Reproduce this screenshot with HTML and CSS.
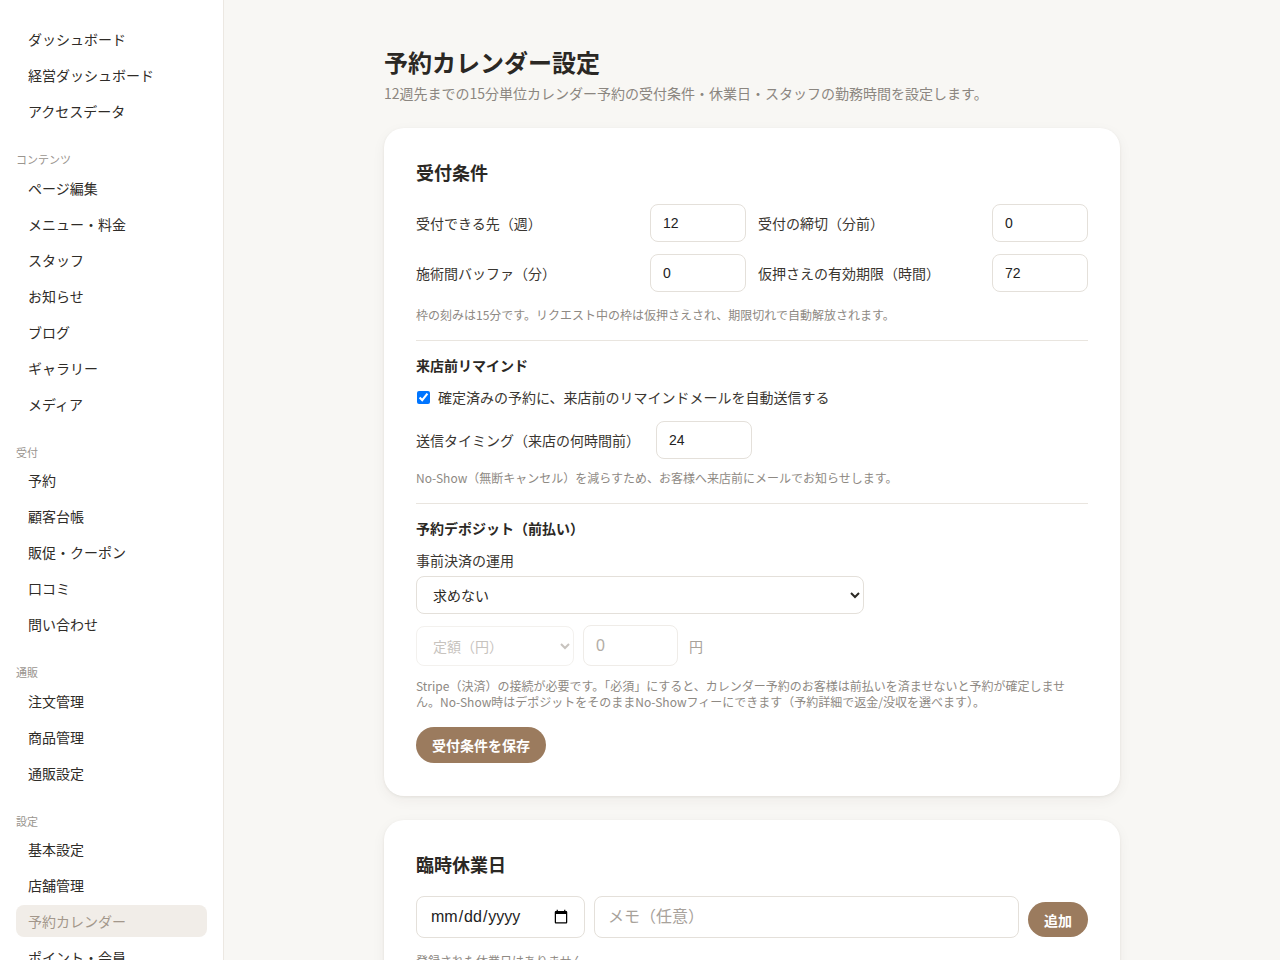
FILE: index.html
```html
<!DOCTYPE html>
<html lang="ja">
<head>
    <meta charset="UTF-8">
    <meta name="viewport" content="width=device-width, initial-scale=1.0">
    <title>予約カレンダー設定</title>
    <link rel="stylesheet" href="styles.css">
</head>
<body>
    <div class="layout">
        <aside class="sidebar">
            <nav class="nav-group">
                <a class="nav-item">ダッシュボード</a>
                <a class="nav-item">経営ダッシュボード</a>
                <a class="nav-item">アクセスデータ</a>
            </nav>
            <nav class="nav-group">
                <div class="nav-label">コンテンツ</div>
                <a class="nav-item">ページ編集</a>
                <a class="nav-item">メニュー・料金</a>
                <a class="nav-item">スタッフ</a>
                <a class="nav-item">お知らせ</a>
                <a class="nav-item">ブログ</a>
                <a class="nav-item">ギャラリー</a>
                <a class="nav-item">メディア</a>
            </nav>
            <nav class="nav-group">
                <div class="nav-label">受付</div>
                <a class="nav-item">予約</a>
                <a class="nav-item">顧客台帳</a>
                <a class="nav-item">販促・クーポン</a>
                <a class="nav-item">口コミ</a>
                <a class="nav-item">問い合わせ</a>
            </nav>
            <nav class="nav-group">
                <div class="nav-label">通販</div>
                <a class="nav-item">注文管理</a>
                <a class="nav-item">商品管理</a>
                <a class="nav-item">通販設定</a>
            </nav>
            <nav class="nav-group">
                <div class="nav-label">設定</div>
                <a class="nav-item">基本設定</a>
                <a class="nav-item">店舗管理</a>
                <a class="nav-item active">予約カレンダー</a>
                <a class="nav-item">ポイント・会員</a>
            </nav>
        </aside>

        <main class="main">
            <div class="content">
                <h1 class="page-title">予約カレンダー設定</h1>
                <p class="page-sub">12週先までの15分単位カレンダー予約の受付条件・休業日・スタッフの勤務時間を設定します。</p>

                <section class="card">
                    <h2 class="card-title">受付条件</h2>
                    <div class="field-grid">
                        <label class="field-label">受付できる先（週）</label>
                        <input class="num-input" type="text" value="12">
                        <label class="field-label">受付の締切（分前）</label>
                        <input class="num-input" type="text" value="0">
                        <label class="field-label">施術間バッファ（分）</label>
                        <input class="num-input" type="text" value="0">
                        <label class="field-label">仮押さえの有効期限（時間）</label>
                        <input class="num-input" type="text" value="72">
                    </div>
                    <p class="note">枠の刻みは15分です。リクエスト中の枠は仮押さえされ、期限切れで自動解放されます。</p>

                    <hr class="divider">

                    <h3 class="sub-title">来店前リマインド</h3>
                    <label class="check-row">
                        <input type="checkbox" checked>
                        <span>確定済みの予約に、来店前のリマインドメールを自動送信する</span>
                    </label>
                    <div class="inline-row">
                        <label class="field-label">送信タイミング（来店の何時間前）</label>
                        <input class="num-input" type="text" value="24">
                    </div>
                    <p class="note tight">No-Show（無断キャンセル）を減らすため、お客様へ来店前にメールでお知らせします。</p>

                    <hr class="divider">

                    <h3 class="sub-title">予約デポジット（前払い）</h3>
                    <label class="block-label">事前決済の運用</label>
                    <select class="select wide">
                        <option>求めない</option>
                        <option>任意</option>
                        <option>必須</option>
                    </select>
                    <div class="deposit-row">
                        <select class="select small" disabled>
                            <option>定額（円）</option>
                        </select>
                        <input class="amount-input" type="text" placeholder="0" disabled>
                        <span class="unit">円</span>
                    </div>
                    <p class="note long">Stripe（決済）の接続が必要です。「必須」にすると、カレンダー予約のお客様は前払いを済ませないと予約が確定しません。No-Show時はデポジットをそのままNo-Showフィーにできます（予約詳細で返金/没収を選べます）。</p>
                    <button class="btn">受付条件を保存</button>
                </section>

                <section class="card">
                    <h2 class="card-title">臨時休業日</h2>
                    <div class="holiday-row">
                        <input class="date-input" type="date">
                        <input class="memo-input" type="text" placeholder="メモ（任意）">
                        <button class="btn small">追加</button>
                    </div>
                    <p class="note">登録された休業日はありません。</p>
                </section>
            </div>
        </main>
    </div>
</body>
</html>
```

FILE: styles.css
```css
* {
    box-sizing: border-box;
}

body {
    margin: 0;
    font-family: "Noto Sans CJK JP", "Noto Sans", sans-serif;
    color: #2b2824;
    background-color: #f8f7f4;
}

.layout {
    display: flex;
    min-height: 100vh;
}

/* sidebar */
.sidebar {
    width: 224px;
    flex-shrink: 0;
    background-color: #fff;
    border-right: 1px solid #ece8e2;
    padding: 23px 16px 20px;
}

.nav-group {
    display: flex;
    flex-direction: column;
    gap: 4px;
}

.nav-group + .nav-group {
    margin-top: 24px;
}

.nav-label {
    font-size: 11px;
    line-height: 16.5px;
    color: #9a958f;
}

.nav-item {
    display: block;
    height: 32px;
    line-height: 32px;
    padding: 0 12px;
    font-size: 14px;
    color: #2f2c28;
    border-radius: 8px;
}

.nav-item.active {
    background-color: #f1ede8;
    color: #a3978b;
}

/* main */
.main {
    flex: 1;
    padding: 46px 0 40px;
}

.content {
    max-width: 736px;
    margin: 0 auto;
}

.page-title {
    margin: 0;
    font-size: 24px;
    line-height: 32px;
    font-weight: 700;
}

.page-sub {
    margin: 5px 0 25px;
    font-size: 14px;
    line-height: 20px;
    color: #8b8680;
}

.card {
    background-color: #fff;
    border-radius: 20px;
    padding: 31px 32px 33px;
    box-shadow: 0 1px 3px rgba(60, 45, 30, 0.08), 0 4px 14px rgba(60, 45, 30, 0.05);
    margin-bottom: 24px;
}

.card-title {
    margin: 0 0 19px;
    font-size: 18px;
    line-height: 26px;
    font-weight: 700;
}

.field-grid {
    display: grid;
    grid-template-columns: 1fr 96px 1fr 96px;
    column-gap: 12px;
    row-gap: 12px;
    align-items: center;
}

.field-label {
    font-size: 14px;
    line-height: 20px;
    color: #3a3631;
}

.num-input {
    width: 96px;
    height: 38px;
    padding: 0 12px;
    font-family: "Liberation Sans", "Noto Sans CJK JP", sans-serif;
    font-size: 14px;
    color: #222;
    border: 1px solid #e4e0da;
    border-radius: 8px;
    background: #fff;
}

.note {
    margin: 14px 0 0;
    font-size: 12px;
    line-height: 18px;
    color: #8e8983;
}

.note.tight {
    margin-top: 10px;
}

.note.long {
    margin-top: 12px;
    line-height: 16px;
}

.divider {
    border: none;
    border-top: 1px solid #e9e5df;
    margin: 16px 0 14px;
}

.sub-title {
    margin: 0 0 12px;
    font-size: 14px;
    line-height: 20px;
    font-weight: 700;
}

.check-row {
    display: flex;
    align-items: center;
    gap: 8px;
    font-size: 14px;
    line-height: 20px;
    color: #3a3631;
}

.check-row input {
    margin: 0 0 0 1px;
    width: 13px;
    height: 13px;
}

.inline-row {
    display: flex;
    align-items: center;
    gap: 16px;
    margin-top: 14px;
}

.block-label {
    display: block;
    font-size: 14px;
    line-height: 20px;
    color: #3a3631;
    margin-bottom: 6px;
}

.select {
    height: 38px;
    padding: 0 12px;
    font-family: inherit;
    font-size: 14px;
    color: #2b2824;
    border: 1px solid #e4e0da;
    border-radius: 8px;
    background-color: #fff;
}

.select.wide {
    width: 448px;
}

.deposit-row {
    display: flex;
    align-items: center;
    gap: 9px;
    margin-top: 11px;
}

.select.small {
    width: 158px;
    height: 40px;
    color: #b0aaa3;
    border-color: #efece8;
}

.amount-input {
    width: 95px;
    height: 41px;
    padding: 0 12px;
    font-family: "Liberation Sans", sans-serif;
    font-size: 16px;
    border: 1px solid #efece8;
    border-radius: 8px;
    background: #fff;
}

.amount-input::placeholder {
    color: #b3ada6;
}

.unit {
    margin-left: 2px;
    font-size: 14px;
    color: #a8a29b;
}

.btn {
    margin-top: 17px;
    height: 36px;
    padding: 0 16px;
    border: none;
    border-radius: 18px;
    background-color: #9b7b5e;
    color: #fff;
    font-family: inherit;
    font-size: 14px;
    font-weight: 700;
    cursor: pointer;
}

.btn:hover {
    background-color: #876a50;
}

.holiday-row {
    display: flex;
    align-items: center;
    gap: 9px;
}

.date-input, .memo-input {
    height: 42px;
    padding: 0 13px;
    font-family: "Liberation Sans", "Noto Sans CJK JP", sans-serif;
    font-size: 16px;
    color: #222;
    border: 1px solid #e4e0da;
    border-radius: 8px;
    background: #fff;
}

.date-input {
    width: 169px;
}

.memo-input {
    flex: 1;
}

.memo-input::placeholder {
    font-family: "Noto Sans CJK JP", sans-serif;
    color: #a8a29b;
}

.btn.small {
    margin-top: 5px;
    height: 35px;
    padding: 0 16px;
}
```
